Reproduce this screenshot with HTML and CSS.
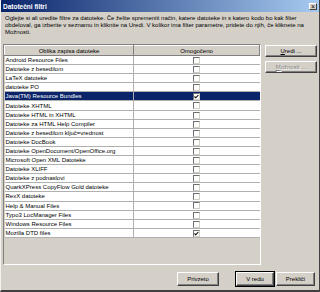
FILE: index.html
```html
<!DOCTYPE html>
<html lang="sl">
<head>
<meta charset="UTF-8">
<title>Datotečni filtri</title>
<link rel="stylesheet" href="styles.css">
</head>
<body>
<div class="window">
	<div class="titlebar">
		<span class="title">Datotečni filtri</span>
		<span class="close">×</span>
	</div>
	<p class="intro">Oglejte si ali uredite filtre za datoteke. Če želite spremeniti način, katere datoteke in s katero kodo bo kak filter obdeloval, ga izberite v seznamu in kliknite na Uredi. V kolikor ima filter parametre, pridete do njih, če kliknete na Možnosti.</p>
	<div class="main">
		<div class="list">
			<table>
				<thead>
					<tr><th class="c1">Oblika zapisa datoteke</th><th>Omogočeno</th></tr>
				</thead>
				<tbody>
					<tr><td class="c1">Android Resource Files</td><td><span class="check"></span></td></tr>
					<tr><td class="c1">Datoteke z besedilom</td><td><span class="check"></span></td></tr>
					<tr><td class="c1">LaTeX datoteke</td><td><span class="check"></span></td></tr>
					<tr><td class="c1">datoteke PO</td><td><span class="check"></span></td></tr>
					<tr class="selected"><td class="c1">Java(TM) Resource Bundles</td><td><span class="check on"><svg viewBox="0 0 5 5"><path d="M0.5 2.5 L1.8 3.8 L4.3 1" /></svg></span></td></tr>
					<tr><td class="c1">Datoteke XHTML</td><td><span class="check"></span></td></tr>
					<tr><td class="c1">Datoteke HTML in XHTML</td><td><span class="check"></span></td></tr>
					<tr><td class="c1">Datoteke za HTML Help Compiler</td><td><span class="check"></span></td></tr>
					<tr><td class="c1">Datoteke z besedilom ključ=vrednost</td><td><span class="check"></span></td></tr>
					<tr><td class="c1">Datoteke DocBook</td><td><span class="check"></span></td></tr>
					<tr><td class="c1">Datoteke OpenDocument/OpenOffice.org</td><td><span class="check"></span></td></tr>
					<tr><td class="c1">Microsoft Open XML Datoteke</td><td><span class="check"></span></td></tr>
					<tr><td class="c1">Datoteke XLIFF</td><td><span class="check"></span></td></tr>
					<tr><td class="c1">Datoteke z podnaslovi</td><td><span class="check"></span></td></tr>
					<tr><td class="c1">QuarkXPress CopyFlow Gold datoteke</td><td><span class="check"></span></td></tr>
					<tr><td class="c1">RexX datoteke</td><td><span class="check"></span></td></tr>
					<tr><td class="c1">Help &amp; Manual Files</td><td><span class="check"></span></td></tr>
					<tr><td class="c1">Typo3 LocManager Files</td><td><span class="check"></span></td></tr>
					<tr><td class="c1">Windows Resource Files</td><td><span class="check"></span></td></tr>
					<tr><td class="c1">Mozilla DTD files</td><td><span class="check on"><svg viewBox="0 0 5 5"><path d="M0.5 2.5 L1.8 3.8 L4.3 1" /></svg></span></td></tr>
				</tbody>
			</table>
		</div>
		<div class="side">
			<button class="btn wide"><u>U</u>redi ...</button>
			<button class="btn wide" disabled><u>M</u>ožnosti ...</button>
		</div>
	</div>
	<div class="footer">
		<button class="btn b-privzeto">Privzeto</button>
		<button class="btn default b-ok">V redu</button>
		<button class="btn b-cancel">Prekliči</button>
	</div>
</div>
</body>
</html>
```

FILE: styles.css
```css
* {
	box-sizing: border-box;
}

body {
	margin: 0;
	font-family: "Liberation Sans", Arial, sans-serif;
	font-size: 6px;
}

.window {
	width: 320px;
	height: 292px;
	background-color: #d4d0c8;
	border-left: 1px solid #f4f3ef;
	border-right: 1px solid #404040;
	border-bottom: 2px solid #404040;
	display: flex;
	flex-direction: column;
}

.titlebar {
	height: 12px;
	background: linear-gradient(to right, #0a246a, #a6caf0);
	display: flex;
	align-items: center;
	justify-content: space-between;
	padding: 0 2px 0 2px;
}

.title {
	color: white;
	font-weight: bold;
	font-size: 6.5px;
}

.close {
	width: 8px;
	height: 7px;
	background-color: #d4d0c8;
	border: 1px solid;
	border-color: #fff #404040 #404040 #fff;
	font-size: 7px;
	line-height: 5px;
	text-align: center;
	color: black;
}

.intro {
	margin: 3px 0 0 4px;
	line-height: 7px;
	height: 29px;
	padding-right: 2px;
}

.main {
	display: flex;
	gap: 4px;
	padding-left: 2px;
	height: 221px;
}

.list {
	width: 258px;
	border: 1px solid;
	border-color: #808080 #fff #fff #808080;
	background-color: #d4d0c8;
}

table {
	width: 256px;
	border-collapse: collapse;
	table-layout: fixed;
}

th {
	height: 10px;
	font-weight: normal;
	background-color: #d4d0c8;
	border: 1px solid;
	border-color: #fff #808080 #808080 #fff;
	padding: 0;
	line-height: 8px;
}

th.c1 {
	width: 129px;
}

td {
	height: 9.1px;
	background-color: white;
	border: 1px solid #b0b0b0;
	border-top: none;
	padding: 0;
	line-height: 8px;
	text-align: center;
}

td.c1 {
	text-align: left;
	padding-left: 1px;
	border-left: none;
}

tr td:last-child {
	border-right: none;
}

tr.selected td {
	background-color: #0a246a;
	color: white;
}

.check {
	display: inline-block;
	width: 7px;
	height: 7px;
	background-color: white;
	border: 1px solid;
	border-color: #707070 #d4d0c8 #d4d0c8 #707070;
	vertical-align: middle;
}

.check svg {
	display: block;
	width: 5px;
	height: 5px;
}

.check path {
	fill: none;
	stroke: black;
	stroke-width: 1.1;
}

.side {
	display: flex;
	flex-direction: column;
	gap: 4px;
	padding-top: 1px;
}

.btn {
	font-family: "Liberation Sans", Arial, sans-serif;
	font-size: 6px;
	background-color: #d4d0c8;
	border: 1px solid;
	border-color: #fff #404040 #404040 #fff;
	box-shadow: inset -1px -1px #808080;
	color: black;
	padding: 0;
	height: 12px;
}

.btn.wide {
	width: 52px;
}

.btn:disabled {
	color: #808080;
	text-shadow: 1px 1px #fff;
}

.footer {
	display: flex;
	padding: 7px 0 0 176px;
}

.footer .btn {
	height: 14px;
}

.b-privzeto {
	width: 42px;
}

.b-ok {
	width: 38px;
	margin-left: 17px;
}

.b-cancel {
	width: 39px;
	margin-left: 2px;
}

.btn.default {
	outline: 1px solid black;
}
```
